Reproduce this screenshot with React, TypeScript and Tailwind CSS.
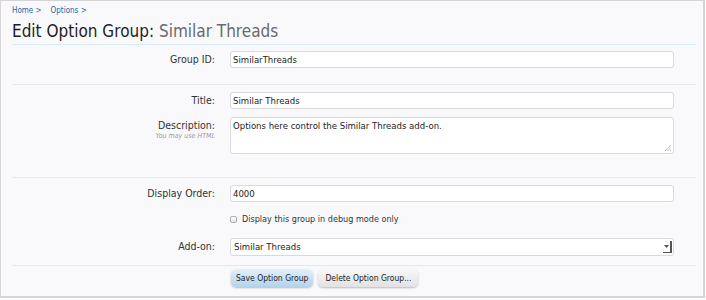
import { useState } from 'react';

const font = { fontFamily: '"DejaVu Sans Condensed", "Liberation Sans Narrow", "Liberation Sans", sans-serif' };

const Label = ({ children, hint }: { children: React.ReactNode; hint?: string }) => (
    <div className="w-[203px] shrink-0 text-right pt-[2px]">
        <div className="text-[10.5px] leading-[13px] text-[#333]">{children}</div>
        {hint && <div className="text-[7px] leading-[9px] italic text-[#9a9a9a]">{hint}</div>}
    </div>
);

const TextBox = ({ value, onChange }: { value: string; onChange: (v: string) => void }) => (
    <input
        type="text"
        value={value}
        onChange={e => onChange(e.target.value)}
        className="block w-full h-[17px] px-[2px] text-[9.5px] text-[#222] bg-white border border-[#d9d9dc] rounded-[3px] outline-none"
    />
);

const Divider = () => <div className="h-px bg-[#e3e9ef]" />;

const App = () => {
    const [form, setForm] = useState({
        groupId: 'SimilarThreads',
        title: 'Similar Threads',
        description: 'Options here control the Similar Threads add-on.',
        displayOrder: '4000',
        debugOnly: false
    });

    return (
        <div className="w-[705px] h-[298px] bg-[#f9f9fc] border border-[#d4d4d9] border-r-2 border-b-2 pl-[11px] pr-[7px] leading-none" style={font}>
            {/* Header */}
            <div className="pt-[5px] text-[8px] leading-[10px] text-[#2b65a0] flex gap-[9px]">
                <span>Home &gt;</span>
                <span>Options &gt;</span>
            </div>
            <h1 className="mt-[5px] text-[17px] leading-[20px] text-[#1e1e1e]">
                Edit Option Group: <span className="text-[#6a6a6a]">Similar Threads</span>
            </h1>
            <div className="mt-[3px] h-px bg-[#d5ecf7]" />

            {/* Group ID */}
            <div className="flex gap-[15px] pt-[6px] pb-[16px]">
                <Label>Group ID:</Label>
                <div className="flex-1 pr-[22px]">
                    <TextBox value={form.groupId} onChange={v => setForm({ ...form, groupId: v })} />
                </div>
            </div>
            <Divider />

            {/* Title + Description */}
            <div className="flex gap-[15px] pt-[7px]">
                <Label>Title:</Label>
                <div className="flex-1 pr-[22px]">
                    <TextBox value={form.title} onChange={v => setForm({ ...form, title: v })} />
                </div>
            </div>
            <div className="flex gap-[15px] pt-[8px] pb-[23px]">
                <Label hint="You may use HTML">Description:</Label>
                <div className="flex-1 pr-[22px]">
                    <div className="relative">
                        <textarea
                            value={form.description}
                            onChange={e => setForm({ ...form, description: e.target.value })}
                            className="block w-full h-[37px] px-[2px] py-[2px] text-[9.5px] leading-[12px] text-[#222] bg-white border border-[#d9d9dc] rounded-[3px] outline-none resize-none"
                        />
                        <svg className="absolute right-[3px] bottom-[3px]" width="7" height="7" viewBox="0 0 7 7">
                            <path d="M1 7L7 1M3.5 7L7 3.5M6 7L7 6" stroke="#aaa" strokeWidth="0.8" />
                        </svg>
                    </div>
                </div>
            </div>
            <Divider />

            {/* Display order, debug, add-on */}
            <div className="flex gap-[15px] pt-[7px]">
                <Label>Display Order:</Label>
                <div className="flex-1 pr-[22px]">
                    <TextBox value={form.displayOrder} onChange={v => setForm({ ...form, displayOrder: v })} />
                </div>
            </div>
            <div className="flex gap-[15px] pt-[11px]">
                <div className="w-[203px] shrink-0" />
                <label
                    onClick={() => setForm({ ...form, debugOnly: !form.debugOnly })}
                    className="flex items-center gap-[5px] text-[9px] leading-[12px] text-[#333]"
                >
                    <span className="w-[7px] h-[7px] rounded-[2px] border border-[#b0b0b4] bg-gradient-to-b from-white to-[#e4e4e8]" />
                    Display this group in debug mode only
                </label>
            </div>
            <div className="flex gap-[15px] pt-[13px] pb-[9px]">
                <Label>Add-on:</Label>
                <div className="flex-1 pr-[22px]">
                    <div className="relative h-[18px] bg-white border border-[#d9d9dc] rounded-[3px] text-[9.5px] leading-[16px] text-[#222] px-[3px]">
                        Similar Threads
                        <div className="absolute right-[1px] top-[2px] w-[9px] h-[12px] border-r-2 border-b border-[#555] flex items-center justify-center">
                            <svg width="5" height="3" viewBox="0 0 5 3"><path d="M0 0h5L2.5 3z" fill="#555" /></svg>
                        </div>
                    </div>
                </div>
            </div>
            <Divider />

            {/* Buttons */}
            <div className="flex gap-[15px] pt-[3px]">
                <div className="w-[203px] shrink-0" />
                <div className="flex gap-[5px] pl-[1px]">
                    <button type="button" className="h-[18px] px-[5px] rounded-[5px] text-[8.5px] leading-none text-[#222] bg-gradient-to-b from-[#e3f0f9] to-[#b3d3ea] shadow-[0_1px_2px_rgba(0,0,0,0.25)]">
                        Save Option Group
                    </button>
                    <button type="button" className="h-[18px] px-[7px] rounded-[5px] text-[8.5px] leading-none text-[#222] bg-gradient-to-b from-[#f8f8f8] to-[#e2e2e5] shadow-[0_1px_2px_rgba(0,0,0,0.25)]">
                        Delete Option Group...
                    </button>
                </div>
            </div>
        </div>
    );
};

export default App;
